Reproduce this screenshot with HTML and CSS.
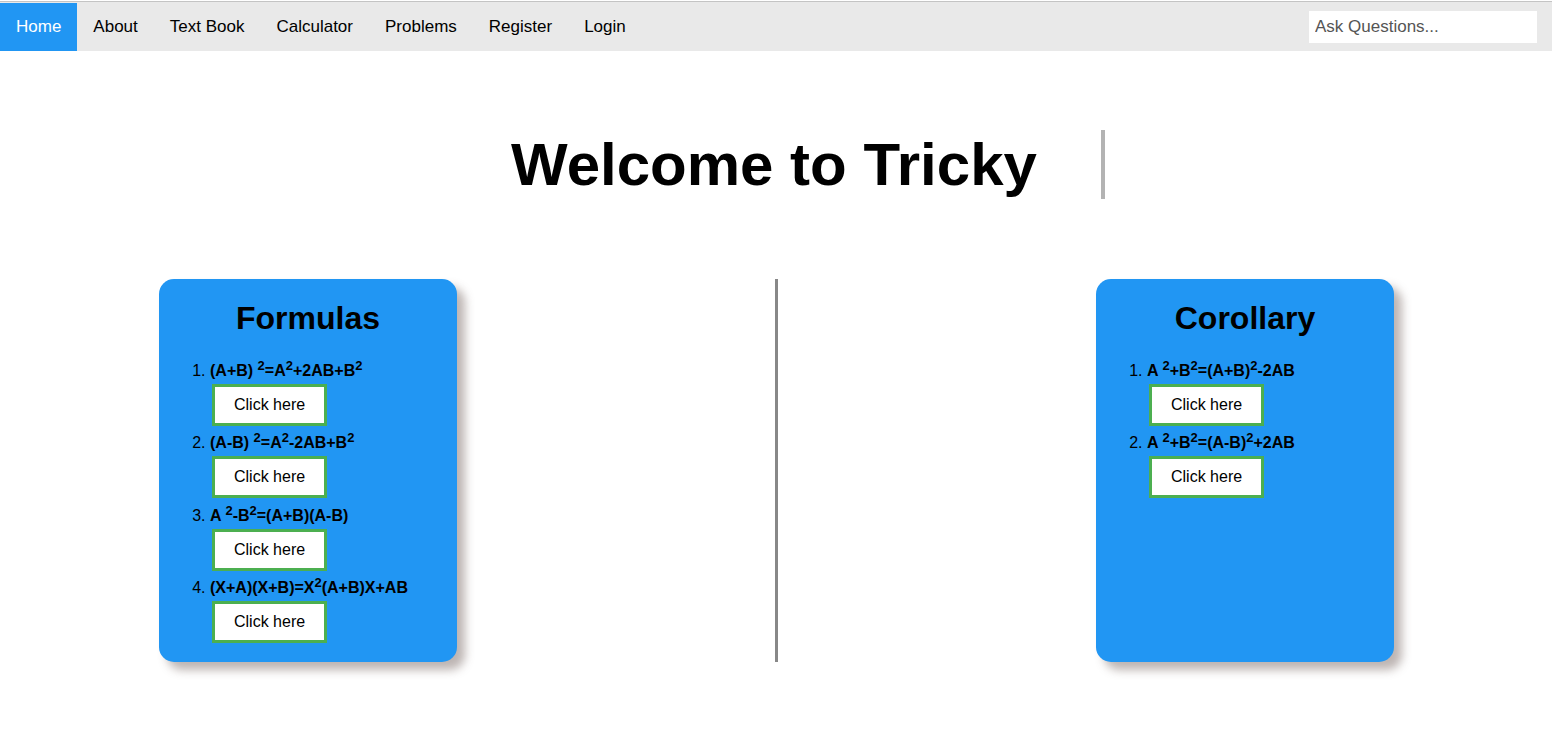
FILE: index.html
```html
<!DOCTYPE html>
<html lang="en">
<head>
<meta charset="utf-8">
<title>Tricky</title>
<link rel="stylesheet" href="styles.css">
</head>
<body>
<nav class="topnav">
  <a class="nav-link active" href="#">Home</a>
  <a class="nav-link" href="#">About</a>
  <a class="nav-link" href="#">Text Book</a>
  <a class="nav-link" href="#">Calculator</a>
  <a class="nav-link" href="#">Problems</a>
  <a class="nav-link" href="#">Register</a>
  <a class="nav-link" href="#">Login</a>
  <input class="search" type="text" placeholder="Ask Questions...">
</nav>

<main class="main">
  <h1 class="title">Welcome to Tricky</h1>

  <section class="cards">
    <div class="card">
      <h2 class="card-title">Formulas</h2>
      <ol class="formula-list">
        <li>
          <b class="formula">(A+B) <sup>2</sup>=A<sup>2</sup>+2AB+B<sup>2</sup></b>
          <a class="btn" href="#">Click here</a>
        </li>
        <li>
          <b class="formula">(A-B) <sup>2</sup>=A<sup>2</sup>-2AB+B<sup>2</sup></b>
          <a class="btn" href="#">Click here</a>
        </li>
        <li>
          <b class="formula">A <sup>2</sup>-B<sup>2</sup>=(A+B)(A-B)</b>
          <a class="btn" href="#">Click here</a>
        </li>
        <li>
          <b class="formula">(X+A)(X+B)=X<sup>2</sup>(A+B)X+AB</b>
          <a class="btn" href="#">Click here</a>
        </li>
      </ol>
    </div>

    <div class="divider"></div>

    <div class="card">
      <h2 class="card-title">Corollary</h2>
      <ol class="formula-list">
        <li>
          <b class="formula">A <sup>2</sup>+B<sup>2</sup>=(A+B)<sup>2</sup>-2AB</b>
          <a class="btn" href="#">Click here</a>
        </li>
        <li>
          <b class="formula">A <sup>2</sup>+B<sup>2</sup>=(A-B)<sup>2</sup>+2AB</b>
          <a class="btn" href="#">Click here</a>
        </li>
      </ol>
    </div>
  </section>
</main>
</body>
</html>
```

FILE: styles.css
```css
* { box-sizing: border-box; }

html, body {
  margin: 0;
  padding: 0;
  background: #ffffff;
}

body {
  font-family: "Liberation Sans", Arial, sans-serif;
  color: #000;
  padding-top: 1px;
  min-height: 745px;
}

.topnav {
  display: flex;
  align-items: center;
  height: 50px;
  background: #e9e9e9;
  border-top: 1px solid #c4c4c4;
}

.nav-link {
  display: block;
  height: 48px;
  line-height: 48px;
  padding: 0 16px;
  font-size: 17px;
  color: #000;
  text-decoration: none;
}

.nav-link.active {
  background: #2196f3;
  color: #fff;
}

.search {
  margin-left: auto;
  margin-right: 15px;
  width: 228px;
  height: 32px;
  border: none;
  outline: none;
  background: #fff;
  padding: 0 6px;
  font-family: "Liberation Sans", Arial, sans-serif;
  font-size: 17px;
  color: #333;
}

.search::placeholder {
  color: #555;
}

.main {
  padding-top: 79px;
  padding-bottom: 40px;
}

.title {
  width: 658px;
  margin: 0 auto;
  font-size: 60px;
  line-height: 69px;
  font-weight: bold;
  text-align: center;
  border-right: 4px solid #b3b3b3;
  white-space: nowrap;
}

.cards {
  display: flex;
  justify-content: space-between;
  align-items: stretch;
  margin-top: 80px;
  padding: 0 158px 0 159px;
}

.card {
  width: 298px;
  height: 383px;
  background: #2196f3;
  border-radius: 15px;
  box-shadow: 8px 8px 10px rgba(90, 70, 65, 0.4);
  padding-top: 21px;
}

.card-title {
  margin: 0;
  font-size: 32px;
  line-height: 37px;
  text-align: center;
  font-weight: bold;
}

.formula-list {
  margin: 23px 0 0 0;
  padding-left: 51px;
  font-size: 16px;
}

.formula-list li {
  margin-bottom: 6.4px;
}

.formula {
  display: block;
  line-height: 22px;
}

.formula sup {
  font-size: 13px;
  line-height: 0;
}

.btn {
  display: inline-block;
  margin: 2px 0 0 2px;
  background: #fff;
  border: 3px solid #4caf50;
  padding: 9px 19px;
  font-size: 16px;
  line-height: 18px;
  color: #000;
  text-decoration: none;
}

.divider {
  width: 3px;
  background: #888888;
}
```
